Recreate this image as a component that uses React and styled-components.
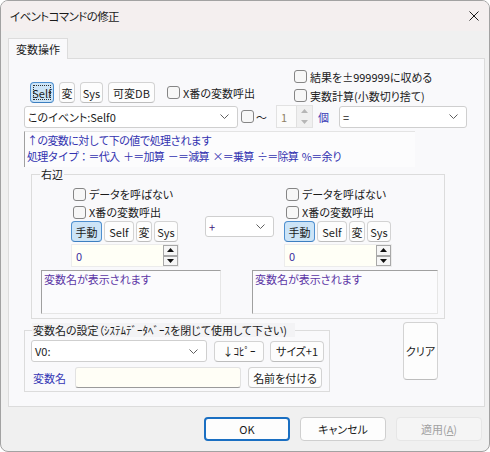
import styled, { createGlobalStyle } from "styled-components";

const GlobalStyle = createGlobalStyle`
  html, body {
    margin: 0;
    padding: 0;
    background: #ffffff;
  }
  body {
    font-family: "Noto Sans CJK JP", "Noto Sans", sans-serif;
    font-size: 11px;
    font-feature-settings: "palt";
    color: #1b1b1b;
  }
`;

const Window = styled.div`
  width: 490px;
  height: 452px;
  box-sizing: border-box;
  border: 1px solid #a2a2a2;
  border-radius: 8px;
  overflow: hidden;
  background: #f0f0f0;
  display: flex;
  flex-direction: column;
`;

const TitleBar = styled.div`
  height: 30px;
  flex: none;
  display: flex;
  align-items: center;
  justify-content: space-between;
  padding: 0 10px 0 9px;
  background: #f4efef;
`;

const Title = styled.span`
  font-size: 11.5px;
  letter-spacing: -0.6px;
  color: #1a1a1a;
`;

const Body = styled.div`
  flex: 1;
  padding: 7px 4px 0 7px;
  display: flex;
  flex-direction: column;
`;

const Tab = styled.div`
  width: 60px;
  height: 21px;
  box-sizing: border-box;
  border: 1px solid #dcdcdc;
  border-bottom: none;
  background: #f9f9fb;
  margin-bottom: -1px;
  position: relative;
  z-index: 1;
  display: flex;
  align-items: center;
  justify-content: center;
`;

const Panel = styled.div`
  height: 349px;
  box-sizing: border-box;
  border: 1px solid #dcdcdc;
  background: #f9f9fb;
  padding: 8px 0 0 15px;
  display: flex;
  flex-direction: column;
`;

const TopRow = styled.div`
  display: grid;
  grid-template-columns: 270px auto;
  height: 38px;
`;

const TopLeft = styled.div`
  display: flex;
  align-items: center;
  align-self: end;
  padding: 0 0 2px 6px;
  gap: 5px;
`;

const CheckColumn = styled.div`
  display: flex;
  flex-direction: column;
`;

const Btn = styled.button`
  position: relative;
  width: ${(p) => p.$w}px;
  height: 21px;
  box-sizing: border-box;
  padding: 0;
  margin: 0;
  font: inherit;
  color: #1b1b1b;
  border: 1px solid ${(p) => (p.$active ? "#4e8fcf" : "#d3d3d3")};
  border-bottom-color: ${(p) => (p.$active ? "#3d7fc0" : "#bdbdbd")};
  border-radius: 4px;
  background: ${(p) => (p.$active ? "#cce4f7" : "#fdfdfd")};
  flex: none;

  &::after {
    content: "";
    display: ${(p) => (p.$focus ? "block" : "none")};
    position: absolute;
    inset: 2px;
    border: 1px dotted #303030;
  }
`;

const Check = styled.label`
  display: flex;
  align-items: center;
  gap: 3px;
  height: ${(p) => p.$h || 19}px;
  margin-left: ${(p) => p.$ml || 0}px;
  white-space: nowrap;
`;

const Box = styled.span`
  width: 13px;
  height: 13px;
  box-sizing: border-box;
  border: 1px solid #858585;
  border-radius: 3px;
  background: #f7f7f7;
  flex: none;
`;

const Row = styled.div`
  display: flex;
  align-items: center;
  margin-top: ${(p) => p.$mt || 0}px;
`;

const SelectBox = styled.div`
  width: ${(p) => p.$w}px;
  height: ${(p) => p.$h || 22}px;
  margin-left: ${(p) => p.$ml || 0}px;
  margin-top: ${(p) => p.$mt || 0}px;
  box-sizing: border-box;
  border: 1px solid #cfcfcf;
  border-radius: 3px;
  background: #ffffff;
  display: flex;
  align-items: center;
  justify-content: space-between;
  padding: 0 8px 0 3px;
  color: ${(p) => p.$color || "#1b1b1b"};
  flex: none;
`;

const Tilde = styled.span`
  width: 20px;
  margin-left: 2px;
`;

const SpinBox = styled.div`
  width: ${(p) => p.$w}px;
  height: 23px;
  box-sizing: border-box;
  border: 1px solid ${(p) => (p.$disabled ? "#e2e2e2" : "#ececec")};
  background: ${(p) => (p.$disabled ? "#fbfbfb" : "#fffff6")};
  display: flex;
  flex: none;
  margin-top: ${(p) => p.$mt || 0}px;
`;

const SpinValue = styled.span`
  flex: 1;
  padding-left: 4px;
  display: flex;
  align-items: center;
  color: ${(p) => (p.$disabled ? "#8e7e66" : "#3c2ea0")};
`;

const SpinArrows = styled.div`
  width: 15px;
  display: flex;
  flex-direction: column;
  background: ${(p) => (p.$disabled ? "#f0f0f0" : "transparent")};
  border-left: 1px solid ${(p) => (p.$disabled ? "#e0e0e0" : "transparent")};
`;

const Arrow = styled.span`
  flex: 1;
  display: flex;
  align-items: center;
  justify-content: center;
  box-sizing: border-box;
  border: ${(p) => (p.$disabled ? "none" : "1px solid #a8a8a8")};
  background: ${(p) => (p.$disabled ? "transparent" : "#f6f6f6")};
`;

const Unit = styled.span`
  width: 13px;
  margin-left: 5px;
  color: #3535b5;
`;

const InfoBox = styled.div`
  width: 391px;
  height: 36px;
  box-sizing: border-box;
  margin-top: 3px;
  border-left: 1px solid #a0a0a0;
  border-top: 1px solid #e4e4e4;
  background: #fcfcfd;
  padding: 0 0 0 2px;
  line-height: 16px;
  letter-spacing: -0.75px;
  word-spacing: 2px;
  font-feature-settings: normal;
  color: #3232b0;
  white-space: nowrap;
`;

const Group = styled.fieldset`
  margin: ${(p) => p.$mt || 0}px 0 0 ${(p) => p.$ml || 0}px;
  width: ${(p) => p.$w}px;
  box-sizing: border-box;
  border: 1px solid #dcdcdc;
  padding: ${(p) => p.$pad};
  min-width: 0;
`;

const Legend = styled.legend`
  line-height: 14px;
  padding: 0 1px;
  margin-left: ${(p) => p.$ml || 0}px;
  width: ${(p) => (p.$w ? `${p.$w}px` : "auto")};
  box-sizing: border-box;
  background: ${(p) => p.$bg || "transparent"};
  white-space: nowrap;
`;

const SideArea = styled.div`
  display: flex;
  align-items: flex-start;
`;

const SideBlock = styled.div`
  width: 108px;
  margin-left: ${(p) => p.$ml}px;
  display: flex;
  flex-direction: column;
  flex: none;
`;

const BtnRow = styled.div`
  display: flex;
  gap: ${(p) => p.$gap || 2}px;
  margin-left: ${(p) => p.$ml || 0}px;
`;

const NameArea = styled.div`
  display: flex;
  gap: 31px;
  margin-top: 3px;
`;

const NameBox = styled.div`
  width: ${(p) => p.$w}px;
  height: 44px;
  box-sizing: border-box;
  border: 1px solid #e6e6e6;
  border-top-color: #a0a0a0;
  border-left-color: #a0a0a0;
  background: #fbfbfd;
  padding: 0 2px;
  line-height: 16px;
  color: #5b35a5;
`;

const BottomArea = styled.div`
  display: flex;
  align-items: flex-start;
`;

const FieldLabel = styled.span`
  width: 44px;
  padding-left: 2px;
  box-sizing: border-box;
  color: #3535b5;
`;

const TextField = styled.div`
  width: 166px;
  height: 21px;
  box-sizing: border-box;
  border: 1px solid #e2e2e2;
  border-bottom-color: #9a9a9a;
  border-radius: 3px;
  background: #fffef6;
  margin-right: 7px;
`;

const ClearButton = styled(Btn)`
  height: 58px;
  margin: 3px 0 0 73px;
`;

const Footer = styled.div`
  display: flex;
  justify-content: flex-end;
  gap: 10px;
  margin-top: 10px;
  padding-right: 3px;
`;

const DialogButton = styled.button`
  width: 86px;
  height: 24px;
  box-sizing: border-box;
  padding: 0;
  font: inherit;
  font-size: 11px;
  border-radius: 4px;
  border: ${(p) =>
    p.$primary ? "2px solid #1a6fc2" : p.disabled ? "1px solid #e6e6e6" : "1px solid #cfcfcf"};
  background: ${(p) => (p.disabled ? "#f5f5f5" : "#fdfdfd")};
  color: ${(p) => (p.disabled ? "#a2a2a2" : "#1b1b1b")};

  u {
    text-decoration: underline;
  }
`;

const Chevron = () => (
  <svg width="9" height="5" viewBox="0 0 9 5">
    <polyline points="0.5,0.5 4.5,4.5 8.5,0.5" fill="none" stroke="#5f5f5f" strokeWidth="1" />
  </svg>
);

const Tri = ({ up, color }) => (
  <svg width="7" height="4" viewBox="0 0 7 4">
    <polygon points={up ? "0,4 3.5,0 7,4" : "0,0 3.5,4 7,0"} fill={color} />
  </svg>
);

function CheckItem({ children, h, ml }) {
  return (
    <Check $h={h} $ml={ml}>
      <Box />
      {children}
    </Check>
  );
}

function Select({ value, w, h, ml, mt, color }) {
  return (
    <SelectBox $w={w} $h={h} $ml={ml} $mt={mt} $color={color}>
      <span>{value}</span>
      <Chevron />
    </SelectBox>
  );
}

function Spin({ value, w, disabled, mt }) {
  const c = disabled ? "#b6b6b6" : "#111111";
  return (
    <SpinBox $w={w} $disabled={disabled} $mt={mt}>
      <SpinValue $disabled={disabled}>{value}</SpinValue>
      <SpinArrows $disabled={disabled}>
        <Arrow $disabled={disabled}>
          <Tri up color={c} />
        </Arrow>
        <Arrow $disabled={disabled}>
          <Tri color={c} />
        </Arrow>
      </SpinArrows>
    </SpinBox>
  );
}

function SideControls({ ml }) {
  return (
    <SideBlock $ml={ml}>
      <CheckItem h={18} ml={2}>データを呼ばない</CheckItem>
      <CheckItem h={18} ml={2}>X番の変数呼出</CheckItem>
      <BtnRow>
        <Btn $w={31} $active>手動</Btn>
        <Btn $w={30}>Self</Btn>
        <Btn $w={16}>変</Btn>
        <Btn $w={24}>Sys</Btn>
      </BtnRow>
      <Spin value="0" w={108} mt={2} />
    </SideBlock>
  );
}

export default function App() {
  return (
    <>
      <GlobalStyle />
      <Window>
        <TitleBar>
          <Title>イベントコマンドの修正</Title>
          <svg width="10" height="10" viewBox="0 0 10 10">
            <path d="M0.5 0.5 L9.5 9.5 M9.5 0.5 L0.5 9.5" stroke="#1a1a1a" strokeWidth="1" />
          </svg>
        </TitleBar>
        <Body>
          <Tab>変数操作</Tab>
          <Panel>
            <TopRow>
              <TopLeft>
                <Btn $w={24} $active $focus>Self</Btn>
                <Btn $w={16}>変</Btn>
                <Btn $w={23}>Sys</Btn>
                <Btn $w={47}>可変DB</Btn>
                <CheckItem ml={7}>X番の変数呼出</CheckItem>
              </TopLeft>
              <CheckColumn>
                <CheckItem>結果を±999999に収める</CheckItem>
                <CheckItem>実数計算(小数切り捨て)</CheckItem>
              </CheckColumn>
            </TopRow>
            <Row>
              <Select value="このイベント:Self0" w={214} />
              <Check $h={22} $ml={3}>
                <Box />
              </Check>
              <Tilde>〜</Tilde>
              <Spin value="1" w={37} disabled />
              <Unit>個</Unit>
              <Select value="=" w={128} ml={8} />
            </Row>
            <InfoBox>
              ↑の変数に対して下の値で処理されます
              <br />
              処理タイプ：＝代入 ＋＝加算 －＝減算 ×＝乗算 ÷＝除算 %＝余り
            </InfoBox>
            <Group $ml={7} $w={414} $pad="4px 0 4px 9px">
              <Legend $ml={-1}>右辺</Legend>
              <SideArea>
                <SideControls ml={30} />
                <Select value="+" w={69} h={21} ml={26} mt={31} color="#40207a" />
                <SideControls ml={10} />
              </SideArea>
              <NameArea>
                <NameBox $w={180}>変数名が表示されます</NameBox>
                <NameBox $w={186}>変数名が表示されます</NameBox>
              </NameArea>
            </Group>
            <BottomArea>
              <Group $mt={4} $w={306} $pad="3px 0 3px 6px">
                <Legend $ml={1} $w={263} $bg="#f3f3f5">
                  変数名の設定（ｼｽﾃﾑﾃﾞｰﾀﾍﾞｰｽを閉じて使用して下さい)
                </Legend>
                <Row>
                  <Select value="V0:" w={176} />
                  <BtnRow $gap={6} $ml={7}>
                    <Btn $w={50}>↓ｺﾋﾟｰ</Btn>
                    <Btn $w={54}>サイズ+1</Btn>
                  </BtnRow>
                </Row>
                <Row $mt={5}>
                  <FieldLabel>変数名</FieldLabel>
                  <TextField />
                  <Btn $w={74}>名前を付ける</Btn>
                </Row>
              </Group>
              <ClearButton $w={35}>クリア</ClearButton>
            </BottomArea>
          </Panel>
          <Footer>
            <DialogButton $primary>OK</DialogButton>
            <DialogButton>キャンセル</DialogButton>
            <DialogButton disabled>
              適用(<u>A</u>)
            </DialogButton>
          </Footer>
        </Body>
      </Window>
    </>
  );
}
